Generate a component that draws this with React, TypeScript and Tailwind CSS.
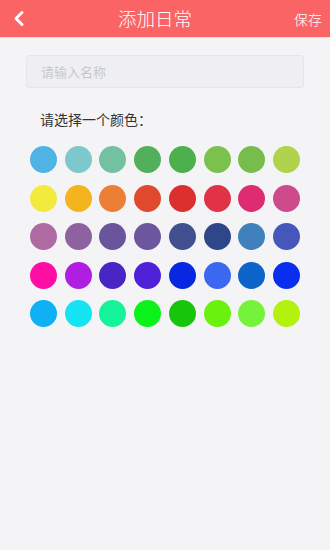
const rows: string[][] = [
  ['#4fb3e3', '#7dc8cc', '#73c0a2', '#53b05a', '#4cb04c', '#7cc14e', '#77bd4e', '#afd34d'],
  ['#f2ea3d', '#f3b41d', '#ec7f35', '#e0492d', '#dc302e', '#e03346', '#de2c72', '#cd4a8d'],
  ['#b06aa3', '#8e62a0', '#6a559c', '#6c569e', '#42508f', '#2f468a', '#3f80bd', '#4657bb'],
  ['#ff0ea5', '#b01fe1', '#4a25c5', '#4e21d8', '#0827e0', '#3c68f1', '#0d64c9', '#0a2ef0'],
  ['#10b1f4', '#14e4f2', '#14f29a', '#0af21a', '#17c60b', '#6af20e', '#76f23a', '#b3f20e'],
]

export default function App() {
  return (
    <div
      className="flex h-[550px] w-[330px] flex-col bg-[#f4f4f6]"
      style={{ fontFamily: '"Noto Sans CJK SC", "Noto Sans", sans-serif' }}
    >
      <header className="relative flex h-[37px] items-center justify-center bg-[#fa6464] text-white">
        <svg
          className="absolute left-[12px] top-[10px]"
          width="14"
          height="17"
          viewBox="0 0 14 17"
          fill="none"
        >
          <path d="M10 2.5 L4 8.5 L10 14.5" stroke="white" strokeWidth="3" strokeLinecap="round" strokeLinejoin="round" />
        </svg>
        <h1 className="mr-[20px] text-[18.5px] font-light leading-none">添加日常</h1>
        <span className="absolute right-[8px] text-[14px] font-light leading-none">保存</span>
      </header>
      <div className="h-px bg-[#fbd6d6]" />

      <div className="px-[26px] pt-[17px]">
        <div className="flex h-[33px] items-center rounded-[3px] border border-[#e6e6e8] bg-[#efeff1] px-[14px]">
          <span className="text-[13px] text-[#c8c8cc]">请输入名称</span>
        </div>
      </div>

      <p className="pl-[40px] pt-[21px] text-[14px] leading-[20px] text-[#333]">请选择一个颜色：</p>

      <div className="mt-[17px] flex flex-col gap-[11.5px] px-[30px]">
        {rows.map((row, i) => (
          <div key={i} className="flex justify-between">
            {row.map((c) => (
              <span key={c} className="h-[27px] w-[27px] rounded-full" style={{ backgroundColor: c }} />
            ))}
          </div>
        ))}
      </div>
    </div>
  )
}
